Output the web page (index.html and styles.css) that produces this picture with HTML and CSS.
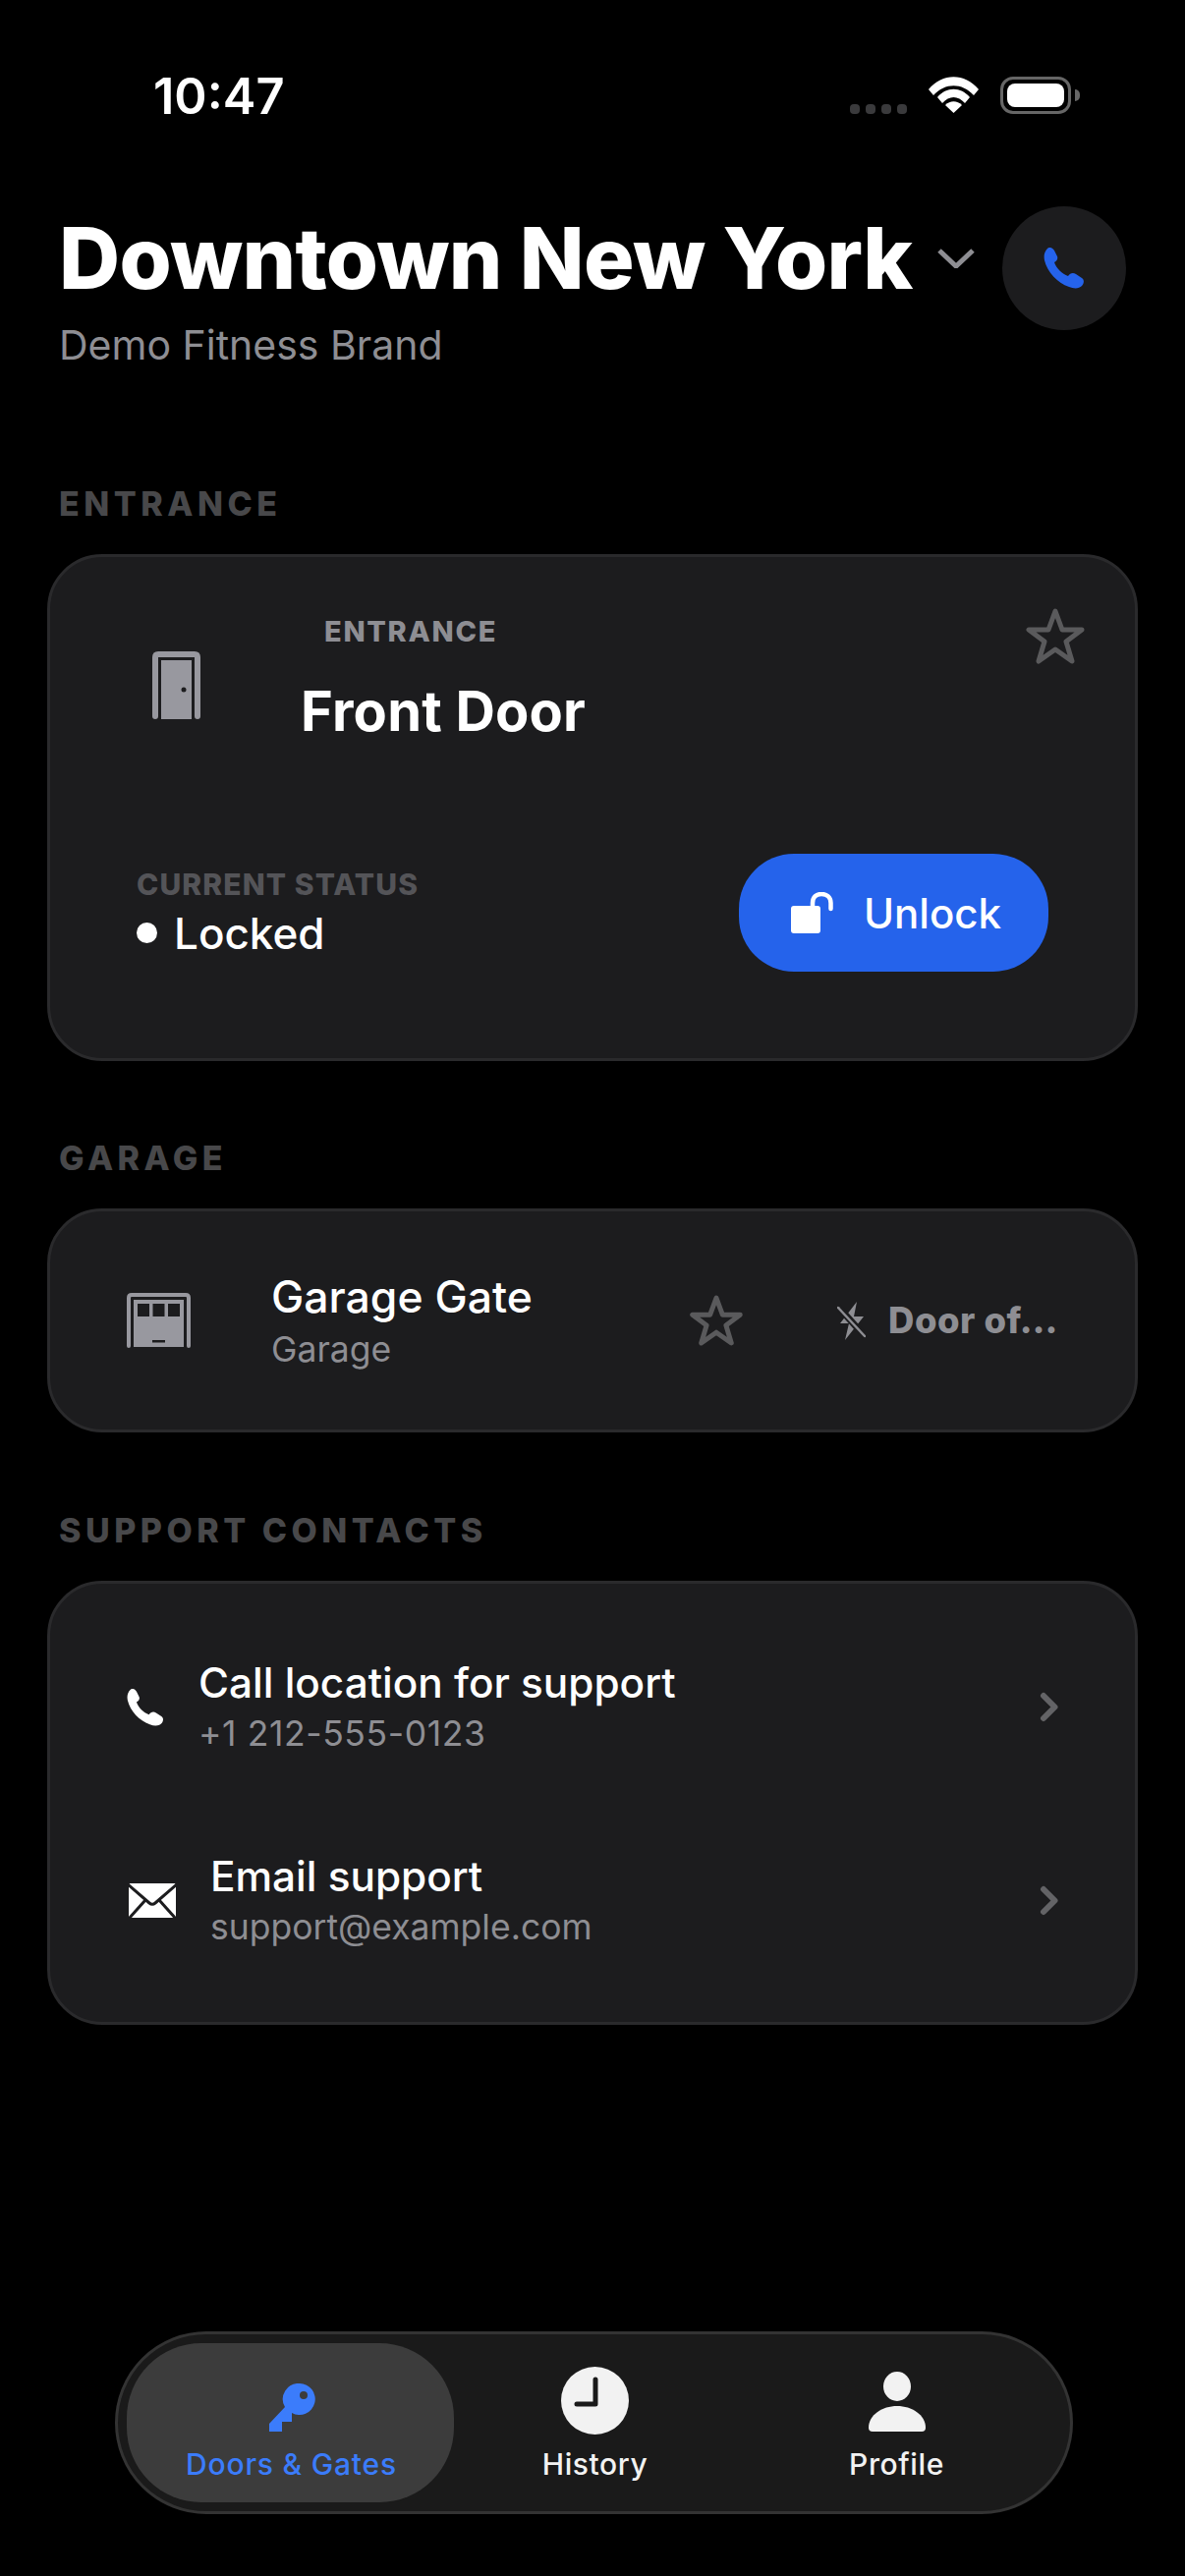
FILE: index.html
```html
<!DOCTYPE html>
<html lang="en">
<head>
    <meta charset="UTF-8">
    <meta name="viewport" content="width=device-width, initial-scale=1.0">
    <title>Doors &amp; Gates</title>
    <link rel="stylesheet" href="styles.css">
</head>
<body>

    <div class="status-bar">
        <span class="clock">10:47</span>
        <div class="status-icons">
            <div class="signal"><i></i><i></i><i></i><i></i></div>
            <svg class="wifi" viewBox="0 0 51 37">
                <path d="M0 13 C14 -4 37 -4 51 13 L46 19 C34 6 17 6 5 19 Z" fill="#fff"/>
                <path d="M9 23 C18 12 33 12 42 23 L37 29 C30 21 21 21 14 29 Z" fill="#fff" transform="translate(0 -2)"/>
                <path d="M17 29 C22 24 29 24 34 29 L25.500 37 Z" fill="#fff"/>
            </svg>
            <div class="battery"><div class="battery-fill"></div></div>
            <div class="battery-cap"></div>
        </div>
    </div>

    <header class="location">
        <div class="location-text">
            <div class="location-name">
                <h1>Downtown New York</h1>
                <svg class="chevron-down" viewBox="0 0 38 20"><path d="M2 2 L19 18 L36 2" fill="none" stroke="#8e8e93" stroke-width="5"/></svg>
            </div>
            <p class="brand">Demo Fitness Brand</p>
        </div>
        <button class="call-btn">
            <svg viewBox="0 0 42 42" width="42" height="42">
                <path d="M4 1 C6 -1 9 0 11 3 L14 9 C15 12 13 14 11 15 C13 21 19 27 25 29 C27 26 30 25 33 27 L39 31 C42 33 41 37 39 39 C36 42 31 42 26 40 C14 36 4 25 1 13 C0 8 1 4 4 1 Z" fill="#2563eb"/>
            </svg>
        </button>
    </header>

    <section class="group group-entrance">
        <h2 class="group-title">ENTRANCE</h2>
        <div class="card door-card">
            <div class="door-top">
                <svg class="door-icon" viewBox="0 0 49 69">
                    <path d="M3 66 V6 Q3 3 6 3 H43 Q46 3 46 6 V66" fill="none" stroke="#98989f" stroke-width="6" stroke-linecap="round"/>
                    <rect x="9" y="9" width="31" height="60" fill="#98989f"/>
                    <circle cx="32" cy="39" r="2.500" fill="#1c1c1e"/>
                </svg>
                <div class="door-names">
                    <span class="door-type">ENTRANCE</span>
                    <span class="door-name">Front Door</span>
                </div>
                <svg class="star star-top" viewBox="0 0 60 57"><path d="M30 3 L37 22 H57 L41 34 L47 54 L30 42 L13 54 L19 34 L3 22 H23 Z" fill="none" stroke="#5a5a5c" stroke-width="5" stroke-linejoin="round"/></svg>
            </div>
            <div class="door-bottom">
                <div class="door-status">
                    <span class="status-label">CURRENT STATUS</span>
                    <span class="status-value"><i class="dot"></i>Locked</span>
                </div>
                <button class="unlock-btn">
                    <svg viewBox="0 0 43 42" width="43" height="42">
                        <rect x="0" y="14" width="30" height="28" rx="3" fill="#fff"/>
                        <path d="M22 16 V11 C22 5 26 2 31 2 C36 2 40.500 5 40.500 11 V17" fill="none" stroke="#fff" stroke-width="4.500" stroke-linecap="round"/>
                    </svg>
                    Unlock
                </button>
            </div>
        </div>
    </section>

    <section class="group group-garage">
        <h2 class="group-title">GARAGE</h2>
        <div class="card gate-card">
            <svg class="gate-icon" viewBox="0 0 65 56">
                <path d="M2 54 V5 Q2 2 5 2 H60 Q63 2 63 5 V54" fill="none" stroke="#98989f" stroke-width="4" stroke-linecap="round"/>
                <rect x="7" y="7" width="51" height="48" fill="#98989f"/>
                <rect x="11" y="11" width="12" height="13" fill="#1c1c1e"/>
                <rect x="26.500" y="11" width="12" height="13" fill="#1c1c1e"/>
                <rect x="42" y="11" width="12" height="13" fill="#1c1c1e"/>
                <rect x="26" y="48" width="13" height="2.500" fill="#1c1c1e"/>
            </svg>
            <div class="gate-names">
                <span class="row-title">Garage Gate</span>
                <span class="row-sub">Garage</span>
            </div>
            <svg class="star star-gate" viewBox="0 0 60 57"><path d="M30 3 L37 22 H57 L41 34 L47 54 L30 42 L13 54 L19 34 L3 22 H23 Z" fill="none" stroke="#5a5a5c" stroke-width="5.500" stroke-linejoin="round"/></svg>
            <div class="offline">
                <svg viewBox="0 0 29 39" width="29" height="39">
                    <path d="M20 0 L3 22 H12 L8 39 L27 15 H17 Z" fill="#8e8e93"/>
                    <path d="M1 5 L28 35" stroke="#1c1c1e" stroke-width="7"/>
                    <path d="M1 6 L28 35" stroke="#8e8e93" stroke-width="2.500" stroke-linecap="round"/>
                </svg>
                <span>Door of…</span>
            </div>
        </div>
    </section>

    <section class="group group-support">
        <h2 class="group-title">SUPPORT CONTACTS</h2>
        <div class="card support-card">
            <div class="contact contact-phone">
                <svg class="contact-icon" viewBox="0 0 42 42" width="38" height="38">
                    <path d="M4 1 C6 -1 9 0 11 3 L14 9 C15 12 13 14 11 15 C13 21 19 27 25 29 C27 26 30 25 33 27 L39 31 C42 33 41 37 39 39 C36 42 31 42 26 40 C14 36 4 25 1 13 C0 8 1 4 4 1 Z" fill="#fff"/>
                </svg>
                <div class="contact-text">
                    <span class="row-title">Call location for support</span>
                    <span class="row-sub">+1 212-555-0123</span>
                </div>
                <svg class="chevron-right" viewBox="0 0 19 31"><path d="M4 4 L15.500 15.500 L4 27" fill="none" stroke="#636366" stroke-width="6" stroke-linecap="round" stroke-linejoin="round"/></svg>
            </div>
            <div class="contact contact-mail">
                <svg class="contact-icon" viewBox="0 0 48 35" width="48" height="35">
                    <rect x="0" y="0" width="48" height="35" rx="1.500" fill="#fff"/>
                    <path d="M-1 1 L21 20 Q24 22.500 27 20 L49 1" fill="none" stroke="#1c1c1e" stroke-width="3"/>
                    <path d="M17 17 L0 36" fill="none" stroke="#1c1c1e" stroke-width="3"/>
                    <path d="M31 17 L48 36" fill="none" stroke="#1c1c1e" stroke-width="3"/>
                </svg>
                <div class="contact-text">
                    <span class="row-title">Email support</span>
                    <span class="row-sub">support@example.com</span>
                </div>
                <svg class="chevron-right" viewBox="0 0 19 31"><path d="M4 4 L15.500 15.500 L4 27" fill="none" stroke="#636366" stroke-width="6" stroke-linecap="round" stroke-linejoin="round"/></svg>
            </div>
        </div>
    </section>

    <nav class="tabbar">
        <div class="tab tab-active">
            <svg viewBox="0 0 48 49" width="48" height="49">
                <path d="M32 0 A16 16 0 1 1 24 30 L24 39 H14 V49 H1 V41 L17 24 A16 16 0 0 1 32 0 Z" fill="#3b7cfb"/>
                <circle cx="36" cy="12" r="4" fill="#3c3c3c"/>
            </svg>
            <span>Doors &amp; Gates</span>
        </div>
        <div class="tab tab-history">
            <svg viewBox="0 0 69 69" width="69" height="69">
                <circle cx="34.500" cy="34.500" r="34.500" fill="#f2f2f2"/>
                <path d="M35 13 V38 H16" fill="none" stroke="#1a1a1a" stroke-width="5" stroke-linecap="round" stroke-linejoin="round"/>
            </svg>
            <span>History</span>
        </div>
        <div class="tab">
            <svg viewBox="0 0 58 69" width="58" height="69">
                <ellipse cx="29" cy="20" rx="14" ry="15" fill="#f2f2f2"/>
                <path d="M0 62 C0 49 14 40 29 40 C44 40 58 49 58 62 Q58 66 54 66 H4 Q0 66 0 62 Z" fill="#f2f2f2"/>
            </svg>
            <span>Profile</span>
        </div>
    </nav>

</body>
</html>
```

FILE: styles.css
```css
* {
    box-sizing: border-box;
}
body {
    font-family: Inter, "Noto Sans", sans-serif;
    margin: 0;
    width: 1206px;
    height: 2622px;
    background-color: #000;
    color: #fff;
    display: flex;
    flex-direction: column;
    overflow: hidden;
}
button {
    font-family: inherit;
    border: none;
}

/* status bar */
.status-bar {
    height: 120px;
    padding: 70px 107px 0 156px;
    display: flex;
    justify-content: space-between;
    align-items: flex-start;
}
.clock {
    font-size: 50.500px;
    font-weight: 600;
    line-height: 56px;
}
.status-icons {
    display: flex;
    align-items: flex-start;
    padding-top: 8px;
}
.signal {
    display: flex;
    gap: 6px;
    margin-top: 28px;
    margin-right: 22px;
}
.signal i {
    width: 10px;
    height: 10px;
    border-radius: 4px;
    background: #3a3a3c;
}
.wifi {
    width: 51px;
    height: 37px;
    margin-right: 22px;
}
.battery {
    width: 72px;
    height: 38px;
    border: 3px solid #666;
    border-radius: 13px;
    padding: 4px;
}
.battery-fill {
    width: 100%;
    height: 100%;
    background: #fff;
    border-radius: 8px;
}
.battery-cap {
    width: 5px;
    height: 12px;
    margin: 13px 0 0 4px;
    border-radius: 0 6px 6px 0;
    background: #666;
}

/* location header */
.location {
    padding: 90px 60px 0 60px;
    display: flex;
    justify-content: space-between;
    align-items: flex-start;
}
.location-name {
    display: flex;
    align-items: center;
    gap: 26px;
    margin-top: 3px;
}
h1 {
    margin: 0;
    font-size: 86px;
    font-weight: 800;
    letter-spacing: -0.7px;
    line-height: 100px;
}
.chevron-down {
    width: 38px;
    height: 20px;
}
.brand {
    margin: 13px 0 0;
    font-size: 41px;
    line-height: 50px;
    color: #8e8e93;
}
.call-btn {
    width: 126px;
    height: 126px;
    border-radius: 50%;
    background: #1c1c1e;
    display: flex;
    align-items: center;
    justify-content: center;
    padding: 0;
}

/* sections */
.group {
    padding: 0 48px;
}
.group-entrance {
    margin-top: 117px;
}
.group-garage {
    margin-top: 79px;
}
.group-support {
    margin-top: 80px;
}
.group-title {
    margin: 0 0 31px 12px;
    font-size: 34px;
    font-weight: 800;
    letter-spacing: 4.5px;
    line-height: 40px;
    color: #48484a;
}
.card {
    background: #1c1c1e;
    border: 3px solid #2a2a2c;
    border-radius: 56px;
}

/* front door card */
.door-card {
    height: 516px;
    padding: 0 51px 0 88px;
    display: flex;
    flex-direction: column;
}
.door-top {
    display: flex;
    align-items: flex-start;
    padding-top: 58px;
}
.door-icon {
    width: 49px;
    height: 69px;
    margin: 38px 0 0 16px;
    flex-shrink: 0;
}
.door-names {
    display: flex;
    flex-direction: column;
    margin-left: 102px;
}
.door-type {
    margin-left: 24px;
    font-size: 29px;
    font-weight: 800;
    letter-spacing: 1.7px;
    line-height: 36px;
    color: #8e8e93;
}
.door-name {
    margin-top: 29px;
    font-size: 56px;
    font-weight: 700;
    letter-spacing: 0.2px;
    line-height: 68px;
}
.star-top {
    width: 60px;
    height: 57px;
    margin: -6px 0 0 auto;
}
.star {
    flex-shrink: 0;
}
.door-bottom {
    margin-top: 111px;
    display: flex;
    justify-content: space-between;
    align-items: center;
    padding-right: 37px;
}
.door-status {
    display: flex;
    flex-direction: column;
}
.status-label {
    font-size: 30px;
    font-weight: 800;
    letter-spacing: 1.100px;
    line-height: 36px;
    color: #545458;
}
.status-value {
    display: flex;
    align-items: center;
    font-size: 44px;
    font-weight: 500;
    line-height: 54px;
    margin-top: 5px;
}
.dot {
    width: 21px;
    height: 21px;
    border-radius: 50%;
    background: #fff;
    margin-right: 17px;
}
.unlock-btn {
    width: 315px;
    height: 120px;
    border-radius: 56px;
    background: #2563eb;
    color: #fff;
    font-size: 42px;
    font-weight: 500;
    display: flex;
    align-items: center;
    gap: 31px;
    padding: 0 0 0 53px;
}

/* garage card */
.gate-card {
    height: 228px;
    padding: 0 78px;
    display: flex;
    align-items: center;
}
.gate-icon {
    width: 65px;
    height: 56px;
    flex-shrink: 0;
}
.gate-names,
.contact-text {
    display: flex;
    flex-direction: column;
}
.gate-names {
    margin-left: 82px;
    width: 429px;
}
.row-title {
    font-size: 44.500px;
    font-weight: 500;
    line-height: 54px;
}
.row-sub {
    margin-top: 5px;
    font-size: 35.500px;
    line-height: 44px;
    color: #8e8e93;
}
.star-gate {
    width: 54px;
    height: 52px;
}
.offline {
    margin-left: 96px;
    display: flex;
    align-items: center;
    gap: 23px;
    color: #8e8e93;
    font-size: 36.500px;
    font-weight: 800;
    letter-spacing: 0.5px;
    white-space: nowrap;
}

/* support card */
.support-card {
    height: 452px;
    padding: 0 78px 0 78px;
    display: flex;
    flex-direction: column;
}
.contact {
    display: flex;
    align-items: center;
}
.contact-phone {
    margin-top: 74px;
}
.contact-mail {
    margin-top: 96px;
}
.contact-icon {
    flex-shrink: 0;
    margin-top: 2px;
}
.contact-phone .contact-text {
    margin-left: 35px;
}
.contact-phone .row-sub {
    letter-spacing: 0.6px;
}
.contact-mail .contact-text {
    margin-left: 35px;
}
.contact-mail .contact-icon {
    margin-left: 2px;
}
.contact-text .row-title {
    font-size: 42.300px;
}
.contact-text .row-sub {
    margin-top: 3px;
}
.chevron-right {
    width: 19px;
    height: 31px;
    margin: 2px 0 0 auto;
}

/* tab bar */
.tabbar {
    margin: auto 114px 63px 117px;
    height: 186px;
    border: 3px solid #333;
    border-radius: 93px;
    background: #1a1a1a;
    padding: 9px;
    display: flex;
}
.tab {
    flex: 0 0 307px;
    height: 162px;
    display: flex;
    flex-direction: column;
    align-items: center;
    justify-content: flex-end;
    gap: 12px;
    padding-bottom: 21px;
    font-size: 30px;
    font-weight: 500;
    letter-spacing: 0.6px;
    line-height: 36px;
    color: #f2f2f2;
}
.tab-active {
    flex: 0 0 333px;
    gap: 15px;
    border-radius: 76px;
    background: #3c3c3c;
    color: #3b7cfb;
    letter-spacing: 0.8px;
    padding-left: 2px;
}
.tab-history {
    margin-left: -10px;
}
```
